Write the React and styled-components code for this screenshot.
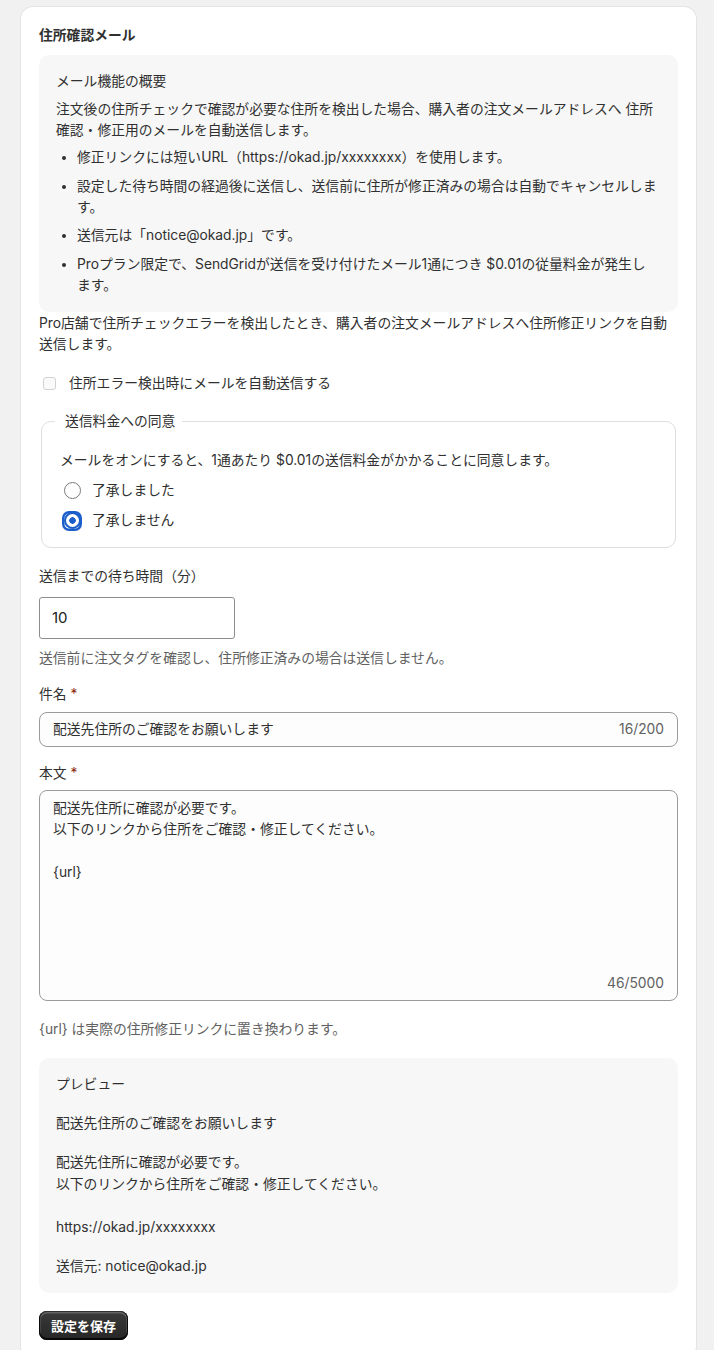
import React from "react";
import styled, { createGlobalStyle } from "styled-components";

const GlobalStyle = createGlobalStyle`
  body {
    margin: 0;
    background: #f1f1f1;
    color: #303030;
    font-family: Inter, "Noto Sans CJK JP", "Noto Sans", sans-serif;
    font-size: 13.8px;
    line-height: 21px;
  }
  * { box-sizing: border-box; }
`;

const Page = styled.div`
  padding: 7px 18px 0 21px;
`;

const Card = styled.section`
  background: #fff;
  border-radius: 12px;
  box-shadow: 0 0 0 1px #e4e4e4, 0 1px 2px rgba(0, 0, 0, 0.05);
  padding: 18px;
`;

const Title = styled.h2`
  margin: 0 0 9px;
  font-size: 13.8px;
  line-height: 21px;
  font-weight: 700;
`;

const GreyBox = styled.div`
  background: #f7f7f7;
  border-radius: 10px;
  padding: 16px 16px 16px 17px;
  margin-top: ${(p) => p.$top || 0}px;
`;

const Para = styled.p`
  margin: ${(p) => p.$top || 0}px 0 0;
  line-height: ${(p) => p.$lh || 21}px;
  white-space: ${(p) => (p.$pre ? "pre-wrap" : "normal")};
`;

const List = styled.ul`
  margin: 6px 0 0;
  padding-left: 21px;
  li + li {
    margin-top: 7.5px;
  }
`;

// keeps a sentence ending together on one line
const Keep = styled.span`
  white-space: nowrap;
`;

const CheckRow = styled.label`
  display: flex;
  align-items: center;
  margin-top: 18px;
  height: 21px;
`;

const CheckBox = styled.span`
  width: 13px;
  height: 13px;
  margin: 0 13px 0 4px;
  border: 1px solid #d2d2d2;
  border-radius: 3px;
  background: #fafafa;
`;

const Fieldset = styled.fieldset`
  margin: 17.5px 2px 0;
  padding: 18px 18px 16px;
  border: 1px solid #dedede;
  border-radius: 10px;
`;

const Legend = styled.legend`
  margin-left: -5px;
  padding: 0 7px 0 10px;
  line-height: 21px;
`;

const RadioRow = styled.label`
  display: flex;
  align-items: center;
  height: 21px;
  margin-top: 9px;
`;

const RadioMark = styled.span`
  width: 20px;
  height: 20px;
  margin: 0 10px 0 2px;
  display: grid;
  place-items: center;
  border-radius: 7px;
  box-shadow: ${(p) => (p.$checked ? "inset 0 0 0 2.5px #1c5fcb" : "none")};
  &::after {
    content: "";
    width: ${(p) => (p.$checked ? 13 : 15)}px;
    height: ${(p) => (p.$checked ? 13 : 15)}px;
    border-radius: 50%;
    border: ${(p) => (p.$checked ? "2px solid #1c5fcb" : "1px solid #7a7a7a")};
    background: ${(p) =>
      p.$checked
        ? "radial-gradient(circle, #1c5fcb 0 3px, #fff 3.5px)"
        : "#fff"};
  }
`;

const FieldLabel = styled.div`
  margin-top: ${(p) => p.$top}px;
  line-height: 21px;
`;

const Required = styled.span`
  color: #8e1f0b;
  margin-left: 4px;
`;

const SmallInput = styled.input`
  display: block;
  margin-top: 9.5px;
  width: 196px;
  height: 42px;
  padding: 0 12px;
  border: 1px solid #8d8d8d;
  border-radius: 3px;
  font-family: Inter, "Noto Sans CJK JP", sans-serif;
  font-size: 15px;
  color: #222;
  background: #fff;
  outline: none;
`;

const Help = styled.div`
  margin-top: ${(p) => p.$top}px;
  color: #616161;
  line-height: 21px;
`;

const Field = styled.div`
  display: flex;
  flex-direction: ${(p) => (p.$multi ? "column" : "row")};
  align-items: ${(p) => (p.$multi ? "stretch" : "center")};
  margin-top: ${(p) => p.$top}px;
  height: ${(p) => (p.$multi ? 211 : 34.5)}px;
  padding: ${(p) => (p.$multi ? "6.5px 13px 6px 13px" : "0 13px")};
  border: 1px solid #9a9a9a;
  border-radius: 8px;
  background: #fdfdfd;
`;

const FieldText = styled.textarea`
  flex: 1;
  min-width: 0;
  padding: 0;
  border: none;
  outline: none;
  resize: none;
  background: transparent;
  color: #303030;
  font-family: Inter, "Noto Sans CJK JP", sans-serif;
  font-size: 13.8px;
  line-height: 21.5px;
  height: ${(p) => (p.$multi ? "auto" : "21.5px")};
  overflow: hidden;
`;

const Counter = styled.span`
  color: #616161;
  line-height: 21px;
  text-align: right;
  margin-left: 12px;
`;

const SaveButton = styled.button`
  display: block;
  margin-top: 18px;
  height: 29px;
  padding: 0 12px;
  border: none;
  border-radius: 8px;
  background: linear-gradient(#3a3a3a, #262626);
  box-shadow: inset 0 -1px 0 1px rgba(0, 0, 0, 0.8),
    inset 0 0 0 1px #303030, inset 0 1px 0 1.5px rgba(255, 255, 255, 0.22);
  color: #fff;
  font-family: Inter, "Noto Sans CJK JP", sans-serif;
  font-size: 13px;
  font-weight: 700;
  cursor: pointer;
`;

const subject = "配送先住所のご確認をお願いします";
const body = "配送先住所に確認が必要です。\n以下のリンクから住所をご確認・修正してください。\n\n{url}";

export default function App() {
  return (
    <>
      <GlobalStyle />
      <Page>
        <Card>
          <Title>住所確認メール</Title>
          <GreyBox>
            <Para>メール機能の概要</Para>
            <Para $top={7}>
              注文後の住所チェックで確認が必要な住所を検出した場合、購入者の注文メールアドレスへ 住所確認・修正用のメールを自動送信します。
            </Para>
            <List>
              <li>修正リンクには短いURL（https://okad.jp/xxxxxxxx）を使用します。</li>
              <li>設定した待ち時間の経過後に送信し、送信前に住所が修正済みの場合は自動でキャンセルします。</li>
              <li>送信元は「notice@okad.jp」です。</li>
              <li>
                Proプラン限定で、SendGridが送信を受け付けたメール1通につき $0.01の従量料金が発生し<Keep>ます。</Keep>
              </li>
            </List>
          </GreyBox>
          <Para $top={1}>
            Pro店舗で住所チェックエラーを検出したとき、購入者の注文メールアドレスへ住所修正リンクを自動送信します。
          </Para>

          <CheckRow>
            <CheckBox />
            住所エラー検出時にメールを自動送信する
          </CheckRow>

          <Fieldset>
            <Legend>送信料金への同意</Legend>
            <Para>メールをオンにすると、1通あたり $0.01の送信料金がかかることに同意します。</Para>
            <RadioRow>
              <RadioMark />
              了承しました
            </RadioRow>
            <RadioRow>
              <RadioMark $checked />
              了承しません
            </RadioRow>
          </Fieldset>

          <FieldLabel $top={18}>送信までの待ち時間（分）</FieldLabel>
          <SmallInput defaultValue="10" />
          <Help $top={9.5}>送信前に注文タグを確認し、住所修正済みの場合は送信しません。</Help>

          <FieldLabel $top={15}>
            件名<Required>*</Required>
          </FieldLabel>
          <Field $top={7}>
            <FieldText rows={1} defaultValue={subject} />
            <Counter>16/200</Counter>
          </Field>

          <FieldLabel $top={16.5}>
            本文<Required>*</Required>
          </FieldLabel>
          <Field $multi $top={6}>
            <FieldText $multi defaultValue={body} />
            <Counter>46/5000</Counter>
          </Field>
          <Help $top={17.5}>{"{url}"} は実際の住所修正リンクに置き換わります。</Help>

          <GreyBox $top={18.5}>
            <Para>プレビュー</Para>
            <Para $top={18}>{subject}</Para>
            <Para $top={18} $lh={21.5} $pre>
              {body.replace("{url}", "https://okad.jp/xxxxxxxx")}
            </Para>
            <Para $top={18}>送信元: notice@okad.jp</Para>
          </GreyBox>

          <SaveButton>設定を保存</SaveButton>
        </Card>
      </Page>
    </>
  );
}
